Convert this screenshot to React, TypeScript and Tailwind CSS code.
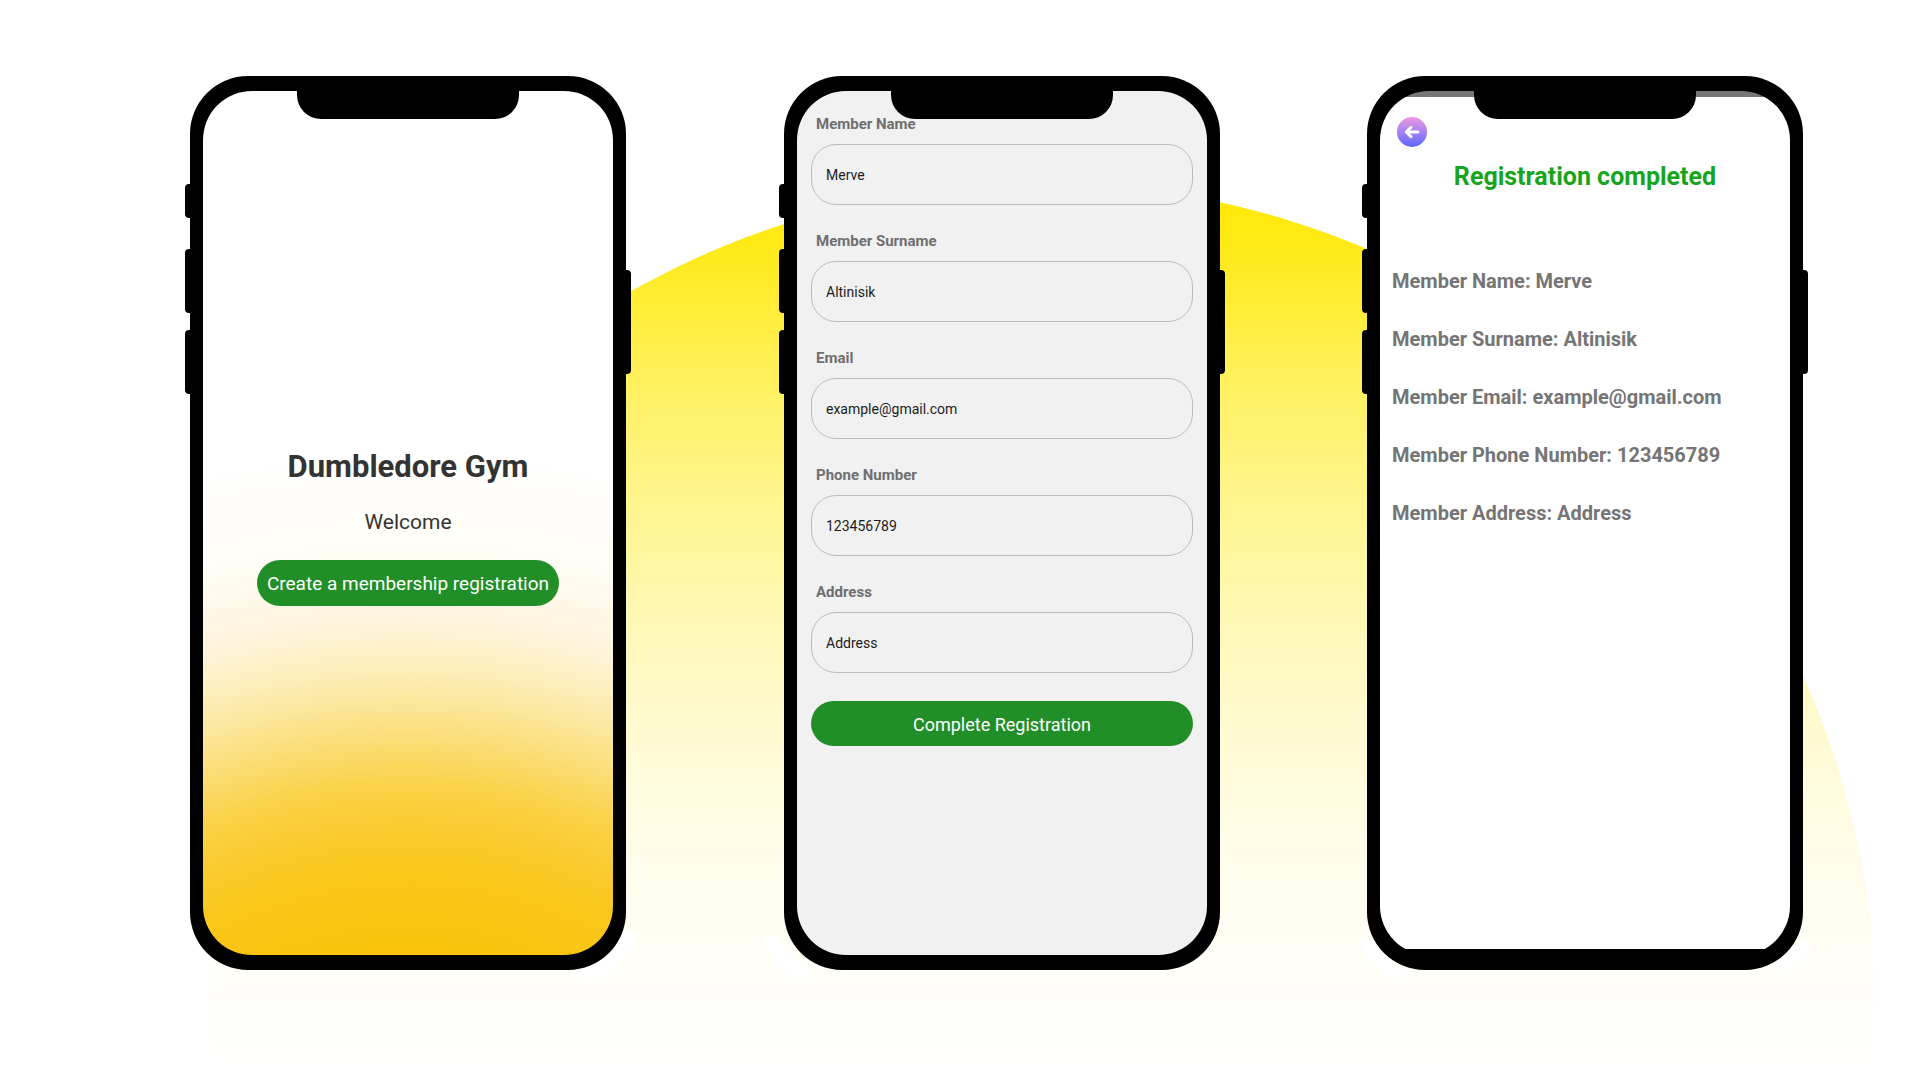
import React from 'react';

interface PhoneProps {
  className: string;
  screenClassName: string;
  children: React.ReactNode;
}

const formFields = [
  { id: 'member-name', label: 'Member Name', type: 'text', value: 'Merve' },
  { id: 'member-surname', label: 'Member Surname', type: 'text', value: 'Altinisik' },
  { id: 'email', label: 'Email', type: 'email', value: 'example@gmail.com' },
  { id: 'phone-number', label: 'Phone Number', type: 'tel', value: '123456789' },
  { id: 'address', label: 'Address', type: 'text', value: 'Address' },
];

const summary = [
  { label: 'Member Name', value: 'Merve' },
  { label: 'Member Surname', value: 'Altinisik' },
  { label: 'Member Email', value: 'example@gmail.com' },
  { label: 'Member Phone Number', value: '123456789' },
  { label: 'Member Address', value: 'Address' },
];

// Yellow sun that fades out towards the bottom of the page
const Backdrop: React.FC = () => (
  <svg
    className="absolute inset-0 w-full h-full"
    viewBox="0 0 1920 1080"
    preserveAspectRatio="xMidYMin slice"
    aria-hidden="true"
  >
    <defs>
      <linearGradient id="sun" gradientUnits="userSpaceOnUse" x1="0" y1="183" x2="0" y2="1083">
        <stop offset="0" stopColor="#ffe800" />
        <stop offset="0.07" stopColor="#ffea18" />
        <stop offset="0.12" stopColor="#ffec2f" />
        <stop offset="0.21" stopColor="#fff05a" />
        <stop offset="0.3" stopColor="#fff37c" />
        <stop offset="0.38" stopColor="#fff595" />
        <stop offset="0.48" stopColor="#fff8b4" />
        <stop offset="0.58" stopColor="#fffacc" />
        <stop offset="0.73" stopColor="#fffce8" />
        <stop offset="0.87" stopColor="#fffef8" />
        <stop offset="1" stopColor="#ffffff" />
      </linearGradient>
    </defs>
    <circle cx="1042" cy="1017" r="834" fill="url(#sun)" />
    <g stroke="#fff" strokeWidth="14" strokeLinecap="round" fill="none">
      <path d="M629 937 Q614 968 584 976" />
      <path d="M772 942 Q782 962 803 974" />
      <path d="M1368 944 Q1376 962 1398 974" />
      <path d="M1804 948 L1784 964" />
    </g>
  </svg>
);

const Phone: React.FC<PhoneProps> = ({ className, screenClassName, children }) => (
  <section className={`relative flex min-h-[894px] rounded-[58px] bg-black px-[13px] py-[15px] ${className}`}>
    {/* Side buttons */}
    <span className="absolute -left-[5px] top-[108px] h-[34px] w-3 rounded-[4px] bg-black" />
    <span className="absolute -left-[5px] top-[173px] h-16 w-3 rounded-[4px] bg-black" />
    <span className="absolute -left-[5px] top-[254px] h-16 w-3 rounded-[4px] bg-black" />
    <span className="absolute -right-[5px] top-[194px] h-[104px] w-3 rounded-[4px] bg-black" />
    <div className={`flex min-w-0 flex-1 flex-col overflow-hidden rounded-[49px] ${screenClassName}`}>
      {children}
    </div>
    {/* Notch */}
    <span className="absolute left-1/2 top-0 h-[43px] w-[222px] -translate-x-1/2 rounded-b-[24px] bg-black" />
  </section>
);

const WelcomeScreen: React.FC = () => (
  <div className="flex flex-1 flex-col items-center pt-[356px] text-[#333]">
    <h1 className="text-[31px] leading-10 font-bold">Dumbledore Gym</h1>
    <p className="mt-[19px] text-[21px] leading-8">Welcome</p>
    <button type="button" className="mt-[22px] h-[46px] w-[302px] rounded-full bg-[#218e27] pt-0.5 text-[19px] text-white">
      Create a membership registration
    </button>
  </div>
);

const RegistrationScreen: React.FC = () => (
  <form className="flex flex-1 flex-col px-[14px] pt-[23px]" onSubmit={(event) => event.preventDefault()}>
    {formFields.map((field) => (
      <div key={field.id} className="mb-[26px] flex flex-col">
        <label htmlFor={field.id} className="ml-[5px] text-[15px] leading-[21px] font-bold text-[#6f6f6f]">
          {field.label}
        </label>
        <input
          id={field.id}
          type={field.type}
          defaultValue={field.value}
          className="mt-[9px] h-[61px] rounded-[25px] border border-[#bbb] bg-transparent px-[14px] text-[14px] text-[#1c1c1c] outline-none"
        />
      </div>
    ))}
    <button type="submit" className="mt-0.5 h-[45px] rounded-full bg-[#218e27] pt-0.5 text-[18px] text-white">
      Complete Registration
    </button>
  </form>
);

const CompletedScreen: React.FC = () => (
  <>
    <div className="h-[6px] bg-[#777]" />
    <div className="mb-[6px] flex flex-1 flex-col bg-white px-3 pt-5">
      <button
        type="button"
        aria-label="Back"
        className="ml-[5px] h-[30px] w-[30px] rounded-full bg-linear-to-b from-[#f095e0] to-[#5865ff]"
      >
        <svg viewBox="0 0 30 30" fill="none" stroke="#fff" strokeWidth="3" strokeLinecap="round" strokeLinejoin="round">
          <path d="M21 15H9.500M14 10.300L9.300 15L14 19.700" />
        </svg>
      </button>
      <h2 className="mt-[14px] text-center text-[25px] leading-8 font-bold text-[#16a51c]">Registration completed</h2>
      <ul className="mt-[74px] flex flex-col gap-[30px] text-[20px] leading-7 font-bold text-[#757575]">
        {summary.map((item) => (
          <li key={item.label}>
            {item.label}: {item.value}
          </li>
        ))}
      </ul>
    </div>
  </>
);

const App: React.FC = () => {
  return (
    <main className="relative min-h-screen overflow-hidden bg-white [font-family:Roboto,sans-serif]">
      <Backdrop />
      <div className="relative grid grid-cols-[190fr_436px_158fr_436px_147fr_436px_117fr] pt-[76px] pb-[110px]">
        <Phone
          className="col-start-2"
          screenClassName="bg-[radial-gradient(860px_770px_at_50%_1121px,#fac207_32%,#fac30c_35%,#fac61a_44%,#facb30_50%,#fad34c_56%,#fbda6c_60%,#fbe38a_64%,#fce9a8_68%,#fdf1c8_73%,#fef4de_77%,#fffdf7_87%,#fff_100%)]"
        >
          <WelcomeScreen />
        </Phone>
        <Phone className="col-start-4" screenClassName="bg-[#f1f1f1]">
          <RegistrationScreen />
        </Phone>
        <Phone className="col-start-6" screenClassName="bg-black">
          <CompletedScreen />
        </Phone>
      </div>
    </main>
  );
};

export default App;
